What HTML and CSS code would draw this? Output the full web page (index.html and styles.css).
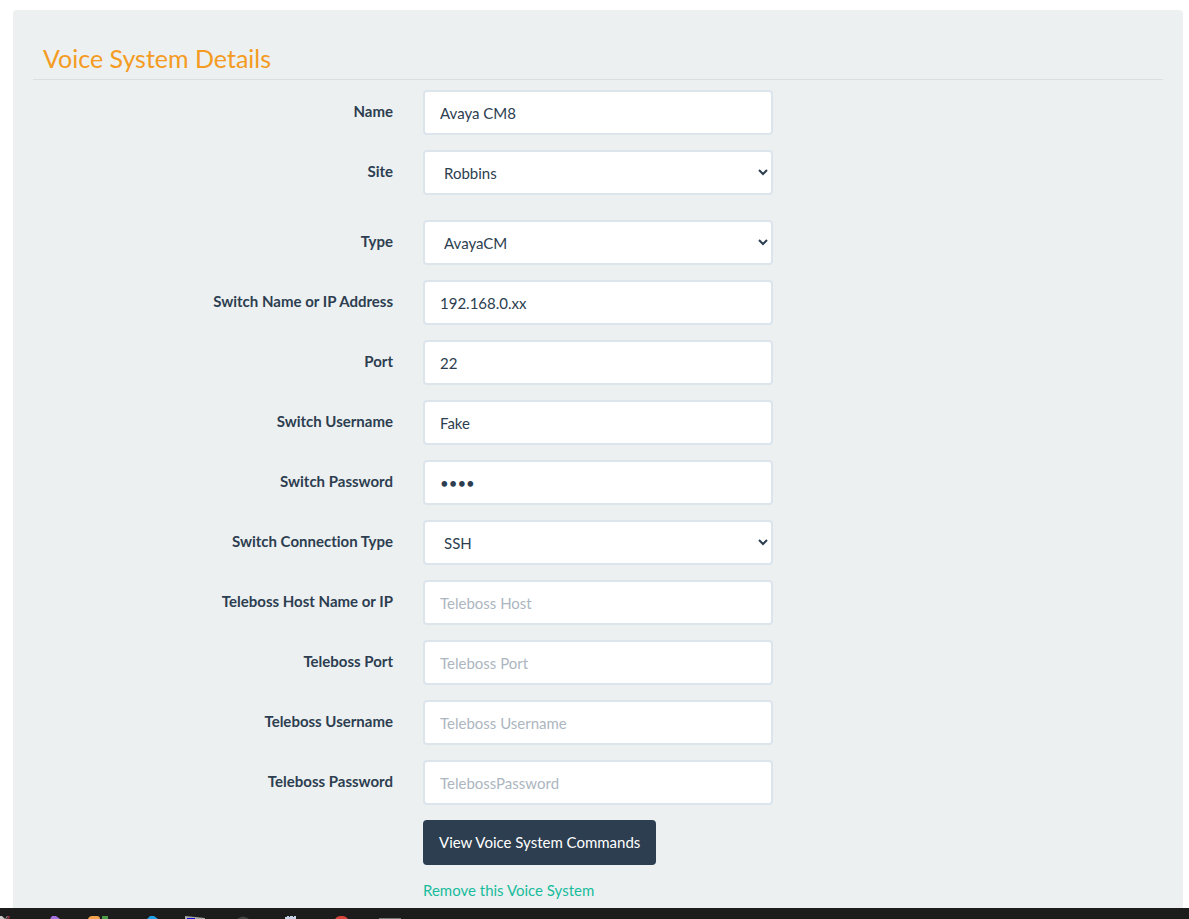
FILE: index.html
```html
<!DOCTYPE html>
<html lang="en">
<head>
<meta charset="utf-8">
<title>Voice System Details</title>
<link rel="stylesheet" href="styles.css">
</head>
<body>
<main class="page">
  <form class="panel">
    <h1 class="panel-title">Voice System Details</h1>
    <div class="field">
      <label for="name">Name</label>
      <input class="control" id="name" type="text" value="Avaya CM8">
    </div>
    <div class="field field-spaced">
      <label for="site">Site</label>
      <select class="control" id="site"><option>Robbins</option></select>
    </div>
    <div class="field">
      <label for="type">Type</label>
      <select class="control" id="type"><option>AvayaCM</option></select>
    </div>
    <div class="field">
      <label for="address">Switch Name or IP Address</label>
      <input class="control" id="address" type="text" value="192.168.0.xx">
    </div>
    <div class="field">
      <label for="port">Port</label>
      <input class="control" id="port" type="text" value="22">
    </div>
    <div class="field">
      <label for="username">Switch Username</label>
      <input class="control" id="username" type="text" value="Fake">
    </div>
    <div class="field">
      <label for="password">Switch Password</label>
      <input class="control" id="password" type="password" value="fake">
    </div>
    <div class="field">
      <label for="connection">Switch Connection Type</label>
      <select class="control" id="connection"><option>SSH</option></select>
    </div>
    <div class="field">
      <label for="tb-host">Teleboss Host Name or IP</label>
      <input class="control" id="tb-host" type="text" placeholder="Teleboss Host">
    </div>
    <div class="field">
      <label for="tb-port">Teleboss Port</label>
      <input class="control" id="tb-port" type="text" placeholder="Teleboss Port">
    </div>
    <div class="field">
      <label for="tb-username">Teleboss Username</label>
      <input class="control" id="tb-username" type="text" placeholder="Teleboss Username">
    </div>
    <div class="field">
      <label for="tb-password">Teleboss Password</label>
      <input class="control" id="tb-password" type="password" placeholder="TelebossPassword">
    </div>
    <div class="field">
      <div class="actions">
        <button class="button" type="button">View Voice System Commands</button>
        <a class="remove" href="#">Remove this Voice System</a>
      </div>
    </div>
  </form>
</main>
<footer class="taskbar">
  <svg width="410" height="11" viewBox="0 0 410 11" aria-hidden="true">
    <path d="M0 8h2l3 3H0z" fill="#c8c8c8"/>
    <path d="M5 11l2-3h1l-2 3z" fill="#999"/>
    <path d="M8 8h2l-1 3H7z" fill="#8c2f3c"/>
    <path d="M50 11l2-3h4l4 3z" fill="#a46fe0"/>
    <path d="M88 11q1-3 4-3h5q3 0 3 3z" fill="#f2a24a"/>
    <path d="M102 8h6v3h-6z" fill="#4a9a48"/>
    <path d="M147 11l3-3h4l4 3z" fill="#1f9fe4"/>
    <path d="M185 8l20 2v1h-20z" fill="#aaa"/>
    <path d="M187 10h8v1h-8z" fill="#0a0ad0"/>
    <path d="M237 11q6-5 12 0z" fill="#444"/>
    <path d="M285 9h2V8h2v1h1V8h3v1h1V8h2v3h-11z" fill="#c6d3e6"/>
    <path d="M335 11q2-3 5-3h3q3 0 5 3z" fill="#d8443a"/>
    <path d="M379 10h22v1h-22z" fill="#777"/>
  </svg>
</footer>
</body>
</html>
```
FILE: styles.css
```css
* {
  box-sizing: border-box;
}

body {
  display: flex;
  flex-direction: column;
  height: 100vh;
  margin: 0;
  background: #fff;
  color: #2c3e50;
  font: 15px/21px Lato, "Liberation Sans", sans-serif;
  font-variant-ligatures: none;
}

.page {
  flex: 1;
  min-height: 0;
  overflow: hidden;
  padding: 10px 6px 0 13px;
}

.panel {
  min-height: 100%;
  padding: 20px;
  border-radius: 4px;
  background: #ecf0f1;
}

.panel-title {
  margin: 0 0 10px;
  padding: 10px 10px 2px;
  border-bottom: 1px solid #dadfe1;
  color: #f49b22;
  font-size: 25px;
  font-weight: 400;
  line-height: 37px;
}

.field {
  display: grid;
  grid-template-columns: 36fr 35fr 36fr;
  column-gap: 30px;
  margin-bottom: 15px;
}

.field-spaced {
  margin-bottom: 25px;
}

.field label {
  padding-top: 11px;
  font-weight: 700;
  text-align: right;
}

.control {
  width: 100%;
  min-width: 0;
  height: 45px;
  padding: 10px 15px;
  border: 2px solid #dce4ec;
  border-radius: 4px;
  background-color: #fff;
  color: #2c3e50;
  font: inherit;
}

select.control {
  padding-right: 0;
}

.control::placeholder {
  color: #acb6c0;
  opacity: 1;
}

.actions {
  display: flex;
  grid-column: 2;
  flex-direction: column;
  gap: 15px;
  align-items: flex-start;
}

.button {
  height: 45px;
  padding: 0 16px;
  border: 0;
  border-radius: 4px;
  background: #2c3e50;
  color: #fff;
  font: inherit;
  white-space: nowrap;
}

.remove {
  color: #18bc9c;
  text-decoration: none;
}

.taskbar {
  flex: none;
  height: 11px;
  background: #1c1c1c;
}

.taskbar svg {
  display: block;
}
```
